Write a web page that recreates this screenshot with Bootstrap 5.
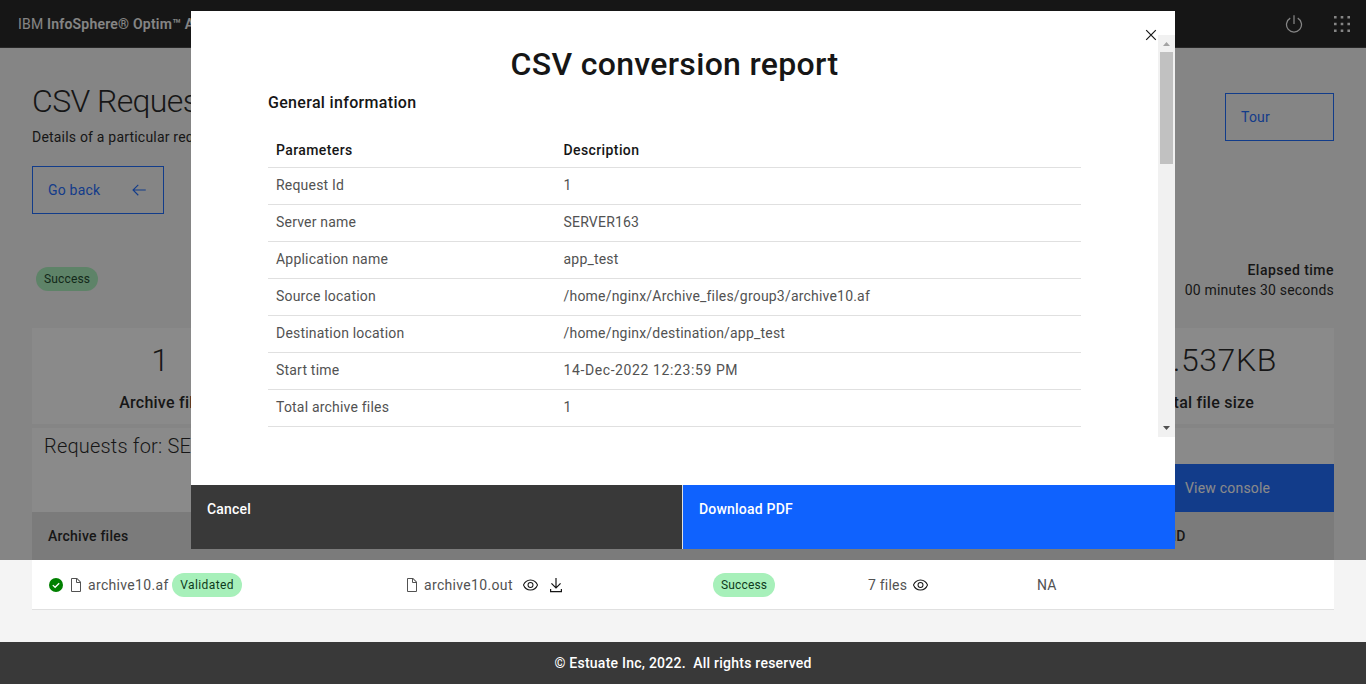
<!doctype html>
<html lang="en">
<head>
<meta charset="utf-8">
<meta name="viewport" content="width=device-width, initial-scale=1">
<title>CSV Request</title>
<link rel="stylesheet" href="https://cdn.jsdelivr.net/npm/bootstrap@5.3.0/dist/css/bootstrap.min.css">
<script src="https://cdn.jsdelivr.net/npm/bootstrap@5.3.0/dist/js/bootstrap.bundle.min.js"></script>
<style>
  body { font: 400 14px/20px Roboto, "Open Sans", sans-serif; letter-spacing: .2px; color: #161616; background: #f4f4f4; height: 684px; overflow: hidden; }
  svg { display: block; flex: none; fill: currentColor; }
  .top-bar { height: 48px; background: #161616; color: #f4f4f4; border-bottom: 1px solid #393939; padding: 0 16px 0 18px; }
  .top-actions { gap: 30px; }
  .product b { font-weight: 600; letter-spacing: .21px; }
  .page-head { height: 279px; padding: 36px 32px 0; }
  .title-line { font-size: 32px; font-weight: 300; line-height: 34px; letter-spacing: -.6px; margin-bottom: 9px; }
  .outline-btn { height: 48px; border: 1px solid #0f62fe; color: #0f62fe; padding: 0 15px; }
  .back-btn { width: 132px; margin-top: 19px; }
  .tour-btn { width: 109px; margin-top: 9px; }
  .status-line { margin-top: 46px; }
  .pill { height: 24px; border-radius: 12px; background: #a7f0ba; color: #0e3b1c; padding: 0 8px; font-size: 12px; line-height: 24px; letter-spacing: .16px; }
  .status-line .pill { margin-bottom: 2px; }
  .elapsed-label { font-weight: 500; letter-spacing: .47px; }
  .stats { height: 96px; background: #fff; margin: 1px 32px 4px; padding-top: 12px; }
  .stat-files { width: 257px; }
  .stat-files .stat-name { padding-left: 9px; }
  .stat-size { padding-right: 57px; }
  .stat-size .stat-name { padding-right: 23px; }
  .stat-num { font-size: 32px; font-weight: 300; line-height: 40px; letter-spacing: .6px; }
  .stat-name { font-size: 16px; font-weight: 500; line-height: 24px; letter-spacing: .25px; margin-top: 11px; }
  .req-panel { height: 84px; background: #fff; margin: 0 32px; }
  .req-title { font-size: 20px; font-weight: 300; line-height: 28px; letter-spacing: .19px; padding: 4px 0 0 12px; }
  .console-btn { width: 196px; height: 48px; background: #0f62fe; color: #fff; padding-left: 47px; }
  .files-head { height: 48px; background: #e0e0e0; margin: 0 32px; font-weight: 500; padding-left: 16px; }
  .files-head span:first-child { width: 1115px; letter-spacing: .23px; }
  .files-row { height: 50px; background: #fff; margin: 0 32px; border-bottom: 1px solid #e0e0e0; color: #525252; padding-left: 16px; }
  .file-name { letter-spacing: .33px; }
  .ink { color: #161616; }
  .c-file { width: 356px; } .c-out { width: 309px; } .c-status { width: 155px; } .c-count { width: 169px; }
  .c-file .pill { margin-left: 3.500px; letter-spacing: .42px; }
  .page-foot { height: 42px; background: #393939; color: #fff; font-weight: 500; margin-top: 32px; white-space: pre; letter-spacing: .24px; }
  .scrim { height: 560px; background: rgba(22, 22, 22, .5); }
  .report { position: absolute; top: 11px; left: 191px; width: 984px; height: 538px; background: #fff; }
  .close-x { position: absolute; top: 16px; right: 16px; }
  .report-body { height: 402px; margin-top: 24px; overflow: hidden; }
  .report-text { padding: 8px 77px 0; }
  .report-title { font-size: 32px; font-weight: 500; line-height: 42px; letter-spacing: .32px; text-align: center; }
  .report-sub { font-size: 16px; font-weight: 500; line-height: 24px; letter-spacing: .32px; margin: 6px 0 18px; }
  .param-table > :not(caption) > * > * { padding: 7px 8px 9px; border-bottom: 1px solid #e0e0e0; color: #525252; background: none; box-shadow: none; }
  .param-table > thead > tr > th { color: #161616; font-weight: 500; letter-spacing: .4px; padding: 7px 8px; }
  .param-table th:first-child { width: 287.500px; }
  .param-table .digits { letter-spacing: .6px; }
  .bar-track { width: 17px; background: #f1f1f1; }
  .bar-thumb { width: 13px; height: 112px; background: #c1c1c1; }
  .report-actions { height: 64px; margin-top: 48px; color: #fff; font-weight: 500; line-height: 20px; letter-spacing: .2px; }
  .report-actions > div { padding: 14px 16px; }
  .act-cancel { width: 492px; background: #393939; border-right: 1px solid #e0e0e0; }
  .act-pdf { background: #0f62fe; }
</style>
</head>
<body>
<header class="top-bar d-flex align-items-center justify-content-between">
  <div class="product">IBM <b>InfoSphere® Optim™ Archive</b></div>
  <div class="top-actions d-flex align-items-center">
    <svg width="20" height="20" viewBox="0 0 32 32"><path d="M22.5 5.74l-1 1.73a11 11 0 11-11 0l-1-1.73a13 13 0 1013 0zM15 2h2v14h-2z"/></svg>
    <svg width="16" height="16" viewBox="0 0 16 16"><path d="M0 0h2.6v2.6H0zM6.7 0h2.6v2.6H6.7zM13.4 0H16v2.6h-2.6zM0 6.7h2.6v2.6H0zM6.7 6.7h2.6v2.6H6.7zM13.4 6.7H16v2.6h-2.6zM0 13.4h2.6V16H0zM6.7 13.4h2.6V16H6.7zM13.4 13.4H16V16h-2.6z"/></svg>
  </div>
</header>

<main>
  <section class="page-head">
    <div class="d-flex justify-content-between">
      <div>
        <div class="title-line">CSV Request</div>
        <div>Details of a particular request</div>
        <div class="outline-btn back-btn d-flex align-items-center justify-content-between">Go back
          <svg width="18" height="18" viewBox="0 0 32 32"><path d="M14 26l1.41-1.41L7.83 17H28v-2H7.83l7.58-7.59L14 6 4 16z"/></svg>
        </div>
      </div>
      <div class="outline-btn tour-btn d-flex align-items-center">Tour</div>
    </div>
    <div class="status-line d-flex justify-content-between align-items-center">
      <span class="pill ms-1">Success</span>
      <div class="text-end"><div class="elapsed-label">Elapsed time</div><div>00 minutes 30 seconds</div></div>
    </div>
  </section>

  <section class="stats d-flex justify-content-between">
    <div class="stat-files text-center"><div class="stat-num">1</div><div class="stat-name">Archive files</div></div>
    <div class="stat-size text-end"><div class="stat-num">5.537KB</div><div class="stat-name">Total file size</div></div>
  </section>

  <section class="req-panel d-flex justify-content-between">
    <div class="req-title">Requests for: SERVER163</div>
    <div class="console-btn d-flex align-items-center align-self-end">View console</div>
  </section>

  <div class="files-head d-flex align-items-center"><span>Archive files</span><span>PID</span></div>
  <div class="files-row d-flex align-items-center">
    <div class="c-file d-flex align-items-center">
      <svg width="16" height="16" viewBox="0 0 16 16"><circle cx="8" cy="8" r="7" fill="#008000"/><path d="M4.8 8.1l2.3 2.2 4.1-4.1" fill="none" stroke="#fff" stroke-width="1.3"/></svg>
      <svg class="mx-1" width="16" height="16" viewBox="0 0 32 32"><path d="M25.7 9.3l-7-7A.9.9 0 0018 2H8a2 2 0 00-2 2v24a2 2 0 002 2h16a2 2 0 002-2V10a.9.9 0 00-.3-.7zM18 4.4l5.6 5.6H18zM24 28H8V4h8v6a2 2 0 002 2h6z"/></svg>
      <span class="file-name">archive10.af</span><span class="pill">Validated</span>
    </div>
    <div class="c-out d-flex align-items-center">
      <svg class="me-1" width="16" height="16" viewBox="0 0 32 32"><path d="M25.7 9.3l-7-7A.9.9 0 0018 2H8a2 2 0 00-2 2v24a2 2 0 002 2h16a2 2 0 002-2V10a.9.9 0 00-.3-.7zM18 4.4l5.6 5.6H18zM24 28H8V4h8v6a2 2 0 002 2h6z"/></svg>
      <span class="file-name">archive10.out</span>
      <svg class="ink ms-2 me-1" width="18" height="16" viewBox="-2 0 34 32"><path d="M30.94 15.66A16.69 16.69 0 0016 5 16.69 16.69 0 001.06 15.66a1 1 0 000 .68A16.69 16.69 0 0016 27a16.69 16.69 0 0014.94-10.66 1 1 0 000-.68zM16 25c-5.3 0-10.9-3.93-12.93-9C5.1 10.93 10.7 7 16 7s10.900 3.930 12.930 9C26.900 21.070 21.300 25 16 25z"/><path d="M16 10a6 6 0 106 6 6 6 0 00-6-6zm0 10a4 4 0 114-4 4 4 0 01-4 4z"/></svg>
      <svg class="ink ms-1" width="18" height="16" viewBox="-1 0 18 16"><path d="M7.4 1h1.2v8.4l3.500-3.500.9.9L8 11.800l-5-5 .9-.9 3.500 3.500zM2 12h1.200v2h9.600v-2H14v3.200H2z"/></svg>
    </div>
    <div class="c-status d-flex"><span class="pill">Success</span></div>
    <div class="c-count d-flex align-items-center">7 files
      <svg class="ink ms-1" width="18" height="16" viewBox="-2 0 34 32"><path d="M30.94 15.66A16.69 16.69 0 0016 5 16.69 16.69 0 001.06 15.66a1 1 0 000 .68A16.69 16.69 0 0016 27a16.69 16.69 0 0014.94-10.66 1 1 0 000-.68zM16 25c-5.3 0-10.9-3.93-12.93-9C5.1 10.93 10.7 7 16 7s10.900 3.930 12.930 9C26.900 21.070 21.300 25 16 25z"/><path d="M16 10a6 6 0 106 6 6 6 0 00-6-6zm0 10a4 4 0 114-4 4 4 0 01-4 4z"/></svg>
    </div>
    <div>NA</div>
  </div>
</main>

<footer class="page-foot d-flex align-items-center justify-content-center">© Estuate Inc, 2022.  All rights reserved</footer>

<div class="scrim fixed-top">
  <div class="report" role="dialog">
    <svg class="close-x" width="16" height="16" viewBox="0 0 16 16"><path d="M3.200 3.200l9.600 9.600M12.800 3.200l-9.600 9.600" fill="none" stroke="#161616" stroke-width="1.200"/></svg>
    <div class="report-body d-flex">
      <div class="report-text flex-grow-1">
        <div class="report-title">CSV conversion report</div>
        <div class="report-sub">General information</div>
        <table class="table param-table mb-0">
          <thead><tr><th>Parameters</th><th>Description</th></tr></thead>
          <tbody>
            <tr><td>Request Id</td><td>1</td></tr>
            <tr><td>Server name</td><td>SERVER163</td></tr>
            <tr><td>Application name</td><td>app_test</td></tr>
            <tr><td>Source location</td><td>/home/nginx/Archive_files/group3/archive10.af</td></tr>
            <tr><td>Destination location</td><td>/home/nginx/destination/app_test</td></tr>
            <tr><td>Start time</td><td class="digits">14-Dec-2022 12:23:59 PM</td></tr>
            <tr><td>Total archive files</td><td>1</td></tr>
          </tbody>
        </table>
      </div>
      <div class="bar-track d-flex flex-column align-items-center">
        <svg width="17" height="17" viewBox="0 0 17 17"><path d="M5 11h7L8.5 7z" fill="#a3a3a3"/></svg>
        <div class="bar-thumb"></div>
        <svg class="mt-auto" width="17" height="17" viewBox="0 0 17 17"><path d="M5 6h7l-3.5 4z" fill="#505050"/></svg>
      </div>
    </div>
    <div class="report-actions d-flex">
      <div class="act-cancel">Cancel</div>
      <div class="act-pdf flex-grow-1">Download PDF</div>
    </div>
  </div>
</div>
</body>
</html>
